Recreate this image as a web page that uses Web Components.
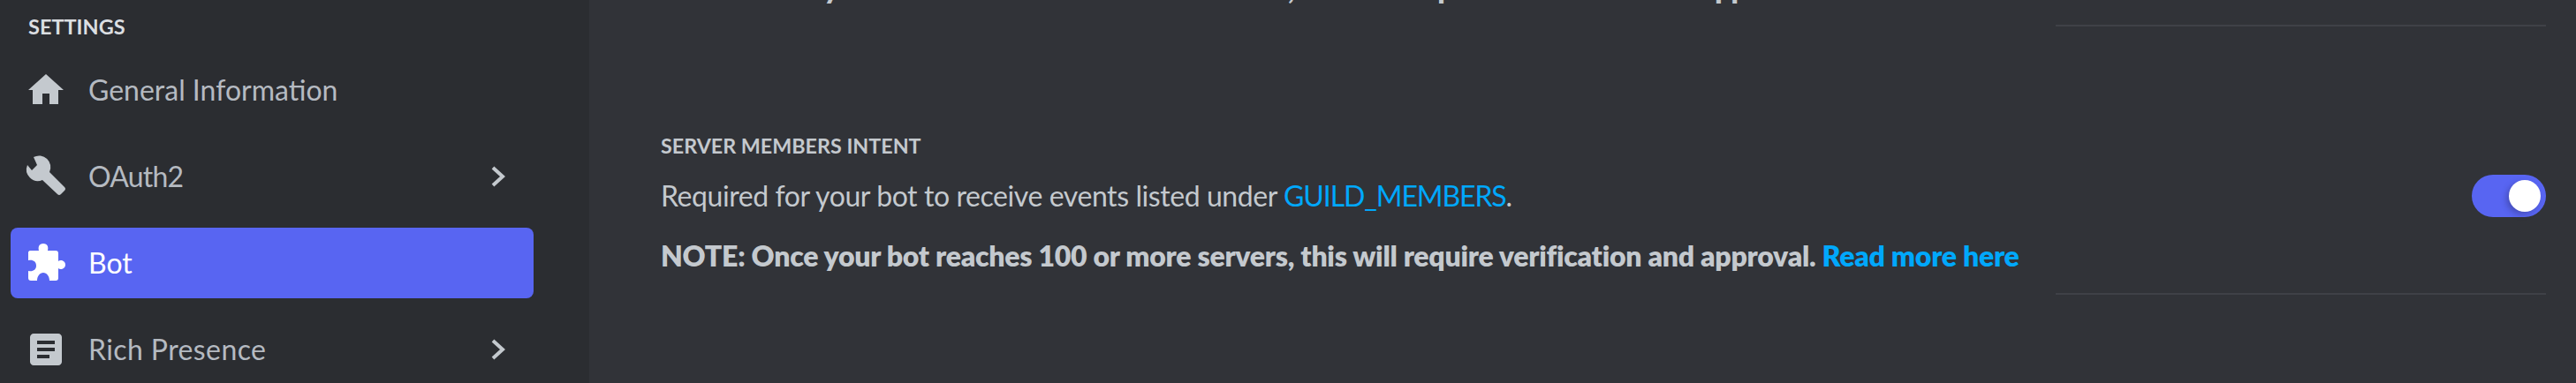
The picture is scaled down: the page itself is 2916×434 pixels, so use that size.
<!DOCTYPE html>
<html>
<head>
<meta charset="utf-8">
<style>
	html, body { margin: 0; height: 100%; background: #313338; overflow: hidden; }
	body { display: flex; height: 434px; font-family: Lato, "Noto Sans", sans-serif; }
	a { color: inherit; text-decoration: none; }
</style>
</head>
<body>
	<settings-sidebar>
		<nav-item label="General Information">
			<svg slot="icon" width="44" height="44" viewBox="0 0 44 44"><path fill="currentColor" d="M20 4 40 22H34V38H24V26H16V38H5V22H0Z"/></svg>
		</nav-item>
		<nav-item label="OAuth2" arrow style="--track:-.8px">
			<svg slot="icon" width="44" height="44" viewBox="0 0 44 44"><path fill="currentColor" d="M6 0A13 13 0 0 1 24 17L41 34Q43 36 41 38L37 42Q35 44 33 42L16 26A13 13 0 0 1-1 9L4 15 10 9Z"/></svg>
		</nav-item>
		<nav-item label="Bot" active>
			<svg slot="icon" width="44" height="44" viewBox="0 0 44 44"><path fill="currentColor" d="M2 8H12C11 4 12 0 17 0 22 0 23 4 22 8H31C33 8 34 9 34 11V20C36 18 42 19 42 24 42 29 36 30 34 28V39C34 41 33 42 31 42H24C24 37 21 33 17 33 13 33 10 37 10 42H3C1 42 0 41 0 39V31C5 32 9 30 9 25 9 20 5 18 0 19V10C0 9 1 8 2 8Z"/></svg>
		</nav-item>
		<nav-item label="Rich Presence" arrow style="--track:.4px">
			<svg slot="icon" width="44" height="44" viewBox="0 0 44 44"><path fill="currentColor" fill-rule="evenodd" d="M6 4H34C36 4 38 6 38 8V36C38 38 36 40 34 40H6C4 40 2 38 2 36V8C2 6 4 4 6 4ZM10 12V16H30V12ZM10 20V24H30V20ZM10 28V32H24V28Z" /></svg>
		</nav-item>
	</settings-sidebar>

	<settings-main>
		<p-note>NOTE: Once your bot reaches 100 or more servers, this will require verification and approval. <a href="#">Read more here</a></p-note>
		<intent-section heading="SERVER MEMBERS INTENT">
			<span slot="desc">Required for your bot to receive events listed under <a href="#" style="color:#00a8fc;letter-spacing:-1.1px">GUILD_MEMBERS</a>.</span>
			<span slot="note">NOTE: Once your bot reaches 100 or more servers, this will require verification and approval. <a href="#" style="color:#00a8fc">Read more here</a></span>
		</intent-section>
	</settings-main>

	<template id="sidebarTpl">
		<style>
			:host { display: block; flex: 0 0 667px; box-sizing: border-box; height: 434px; overflow: hidden; background: #2b2d31; padding: 0 63px 0 12px; }
			.title { margin: 17px 0 0 20px; height: 26px; line-height: 26px; font-size: 23.500px; font-weight: 700; color: #dbdee1; }
			.list { display: flex; flex-direction: column; gap: 18px; margin-top: 19px; }
		</style>
		<div class="title">SETTINGS</div>
		<div class="list"><slot></slot></div>
	</template>

	<template id="navTpl">
		<style>
			:host { display: flex; align-items: center; height: 80px; flex: none; border-radius: 8px; color: #b5bac1; padding: 0 32px 0 20px; }
			:host([active]) { background: #5865f2; color: #fff; }
			.icon { display: flex; width: 44px; height: 44px; color: #c4c9ce; }
			.icon ::slotted(svg) { overflow: visible; }
			:host([active]) .icon { color: #fff; }
			.label { margin-left: 24px; margin-top: -1px; flex: 1; font-size: 32px; letter-spacing: var(--track, 0); }
			svg.arrow { display: none; color: #c4c9ce; }
			:host([arrow]) svg.arrow { display: block; }
		</style>
		<span class="icon"><slot name="icon"></slot></span>
		<span class="label"></span>
		<svg class="arrow" width="16" height="24" viewBox="0 0 16 24"><path d="M2 2 13 12 2 22" fill="none" stroke="currentColor" stroke-width="4"/></svg>
	</template>

	<template id="mainTpl">
		<style>
			:host { display: block; flex: 1; min-width: 0; height: 434px; overflow: hidden; padding: 0 34px 0 81px; }
			.inner { margin-top: -29px; }
		</style>
		<div class="inner"><slot></slot></div>
	</template>

	<template id="noteTpl">
		<style>
			:host { display: block; height: 57px; line-height: 32px; font-size: 32px; font-weight: 800; letter-spacing: -.25px; color: #c4c9ce; white-space: nowrap; }
			.rule { height: 2px; margin: 25px 0 0 auto; width: 555px; background: #3f4147; }
		</style>
		<slot></slot>
		<div class="rule"></div>
	</template>

	<template id="intentTpl">
		<style>
			:host { display: block; }
			.h { margin-top: 125px; height: 24px; line-height: 24px; font-size: 23.300px; font-weight: 700; color: #c4c9ce; }
			.desc { margin-top: 25px; line-height: 40px; font-size: 32px; letter-spacing: -.42px; color: #c4c9ce; white-space: nowrap; }
			.note { margin-top: 28px; line-height: 40px; font-size: 32px; font-weight: 800; letter-spacing: -.25px; color: #c4c9ce; white-space: nowrap; }
			.row { display: flex; align-items: flex-start; }
			.text { flex: 1; min-width: 0; }
			.rule { height: 2px; margin: 22px 0 0 auto; width: 555px; background: #3f4147; }
		</style>
		<div class="row">
			<div class="text">
				<div class="h"></div>
				<div class="desc"><slot name="desc"></slot></div>
				<div class="note"><slot name="note"></slot></div>
			</div>
			<intent-toggle></intent-toggle>
		</div>
		<div class="rule"></div>
	</template>

	<template id="toggleTpl">
		<style>
			:host { display: block; flex: none; width: 84px; height: 48px; border-radius: 24px; background: #5865f2; padding: 6px; box-sizing: border-box; margin-top: 170px; }
			.knob { width: 36px; height: 36px; margin-left: auto; border-radius: 50%; background: #fff; box-shadow: -3px 3px 6px rgba(40,40,90,.35); }
		</style>
		<div class="knob"></div>
	</template>

	<script>
		(function(customElements) {
			'use strict';

			function stamp(el, id) {
				const root = el.attachShadow({mode: 'open'});
				root.appendChild(document.getElementById(id).content.cloneNode(true));
				return root;
			}

			class SettingsSidebar extends HTMLElement {
				constructor() { super(); stamp(this, 'sidebarTpl'); }
			}

			class NavItem extends HTMLElement {
				constructor() { super(); this.root = stamp(this, 'navTpl'); }
				connectedCallback() {
					this.root.querySelector('.label').textContent = this.getAttribute('label');
				}
			}

			class SettingsMain extends HTMLElement {
				constructor() { super(); stamp(this, 'mainTpl'); }
			}

			class PNote extends HTMLElement {
				constructor() { super(); stamp(this, 'noteTpl'); }
			}

			class IntentSection extends HTMLElement {
				constructor() { super(); this.root = stamp(this, 'intentTpl'); }
				connectedCallback() {
					this.root.querySelector('.h').textContent = this.getAttribute('heading');
				}
			}

			class IntentToggle extends HTMLElement {
				constructor() { super(); stamp(this, 'toggleTpl'); }
			}

			customElements.define('settings-sidebar', SettingsSidebar);
			customElements.define('nav-item', NavItem);
			customElements.define('settings-main', SettingsMain);
			customElements.define('p-note', PNote);
			customElements.define('intent-section', IntentSection);
			customElements.define('intent-toggle', IntentToggle);
		})(window.customElements);
	</script>
</body>
</html>
